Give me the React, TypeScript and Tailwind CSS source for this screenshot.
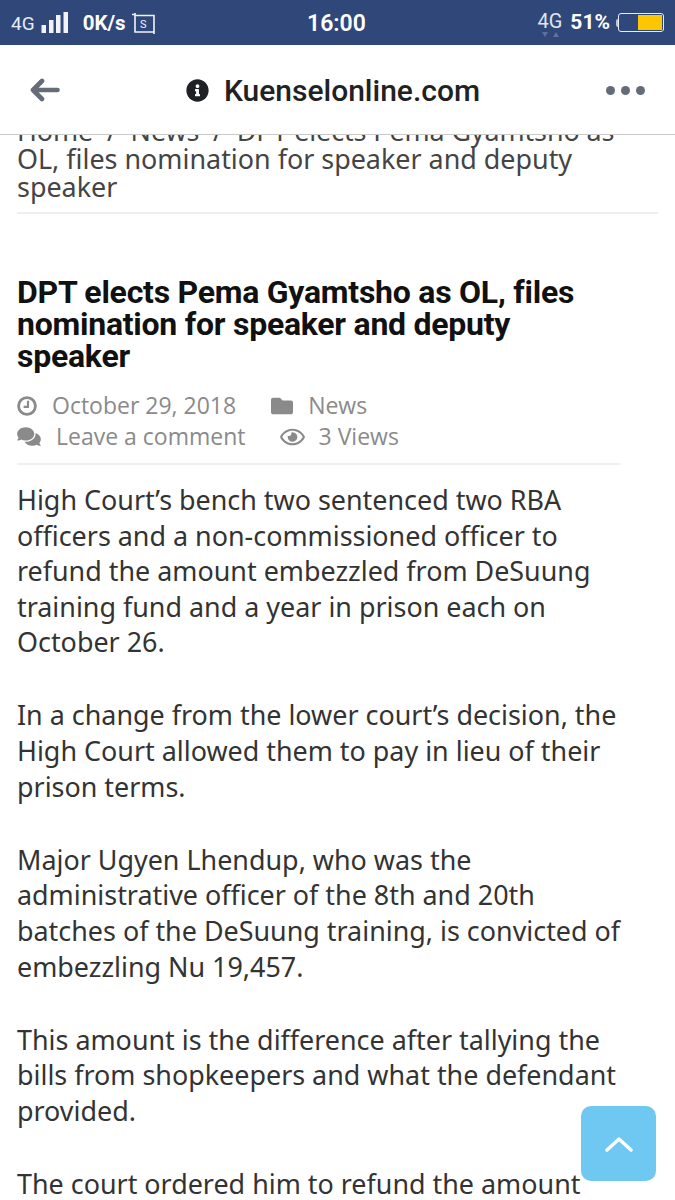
import React from "react";
import { FaInfoCircle, FaFolder, FaComments, FaRegEye } from "react-icons/fa";

const paragraphs = [
  ["High Court’s bench two sentenced two RBA", "officers and a non-commissioned officer to", "refund the amount embezzled from DeSuung", "training fund and a year in prison each on", "October 26."],
  ["In a change from the lower court’s decision, the", "High Court allowed them to pay in lieu of their", "prison terms."],
  ["Major Ugyen Lhendup, who was the", "administrative officer of the 8th and 20th", "batches of the DeSuung training, is convicted of", "embezzling Nu 19,457."],
  ["This amount is the difference after tallying the", "bills from shopkeepers and what the defendant", "provided."],
  ["The court ordered him to refund the amount"],
];

function StatusBar() {
  return (
    <div className="h-[45px] shrink-0 bg-[#2f4779] text-white flex items-center justify-between pl-[11px] pr-[10px] font-['Roboto',sans-serif]">
      <div className="flex items-center w-[200px]">
        <span className="text-[19px] mt-[3px] text-[#e8ecf4]">4G</span>
        <svg width="28" height="23" viewBox="0 0 28 23" className="ml-[6px] mb-[1px]" fill="#f1f3f8">
          <rect x="0.5" y="14" width="4.5" height="8" />
          <rect x="8" y="9" width="4.5" height="13" />
          <rect x="15" y="4" width="4.5" height="18" />
          <rect x="22.5" y="1" width="4.5" height="21" />
        </svg>
        <span className="ml-[14px] text-[20.5px] font-bold mt-[1px]">0K/s</span>
        <svg width="26" height="24" viewBox="0 0 26 24" className="ml-[5px] mt-[2px]" fill="none" stroke="#f1f3f8" strokeWidth="1.6">
          <path d="M1 2.5h3M4 1v19h19M4 3.5h19v16" />
          <path d="M23 19v3" />
          <text x="9" y="16" fontSize="11" fontFamily="Roboto, sans-serif" fill="#f1f3f8" stroke="none">S</text>
        </svg>
      </div>
      <span className="text-[23px] font-semibold mr-[3px] mt-[3px] font-['Roboto',sans-serif]">16:00</span>
      <div className="flex items-center w-[200px] justify-end">
        <div className="relative mr-[8px] mb-[3px]">
          <span className="block text-[20px] leading-[20px] text-[#dfe4ee]">4G</span>
          <svg width="22" height="7" viewBox="0 0 22 7" className="absolute left-[3px] top-[20px]" fill="#5e7199">
            <path d="M2 1h6L5 6zM13 6h6l-3-5z" />
          </svg>
        </div>
        <span className="text-[21px] font-bold mt-[1px]">51%</span>
        <div className="w-[2px] h-[8px] bg-[#b9c3d6] ml-[6px] rounded-l-sm" />
        <div className="w-[46px] h-[19px] border border-[#e8ecf4] rounded-[3px] flex justify-end p-[1px] mr-[1px]">
          <div className="w-[24px] bg-[#fcc600]" />
        </div>
      </div>
    </div>
  );
}

function BrowserBar() {
  return (
    <div className="relative z-10 h-[90px] shrink-0 bg-white border-b border-[#c9c9c9] flex items-center justify-between pl-[30px] pr-[30px]">
      <svg width="30" height="24" viewBox="0 0 30 24" fill="none" stroke="#656c78" strokeWidth="4.6" strokeLinecap="round" strokeLinejoin="round">
        <path d="M27.5 12H3M12 3l-9 9 9 9" />
      </svg>
      <div className="flex items-center gap-[15px] mt-[2px]">
        <FaInfoCircle className="text-[#1f2124] w-[23px] h-[23px]" />
        <span className="text-[30px] font-medium text-[#1f2124] font-['Roboto',sans-serif]">Kuenselonline.com</span>
      </div>
      <div className="flex gap-[6px] mt-[1px]">
        <span className="w-[9px] h-[9px] rounded-full bg-[#656c78]" />
        <span className="w-[9px] h-[9px] rounded-full bg-[#656c78]" />
        <span className="w-[9px] h-[9px] rounded-full bg-[#656c78]" />
      </div>
    </div>
  );
}

export default function App() {
  return (
    <div className="relative w-[675px] h-[1200px] overflow-hidden bg-white flex flex-col font-['Noto_Sans',sans-serif]">
      <StatusBar />
      <BrowserBar />
      <main className="flex-1 overflow-hidden">
        {/* breadcrumb trail, scrolled partly under the browser bar */}
        <div className="-mt-[18px] mx-[17px] pb-[11px] border-b-2 border-[#efefef] text-[26.9px] leading-[28px] text-[#444]">
          <div className="tracking-[-0.1px]">Home &nbsp;/&nbsp; News &nbsp;/&nbsp; DPT elects Pema Gyamtsho as</div>
          <div>OL, files nomination for speaker and deputy</div>
          <div>speaker</div>
        </div>

        <h1 className="mt-[62px] mx-[17px] text-[32px] leading-[32px] font-bold text-[#111] tracking-[-0.25px] font-['Roboto',sans-serif]">
          DPT elects Pema Gyamtsho as OL, files
          <br />
          nomination for speaker and deputy
          <br />
          speaker
        </h1>

        <div className="mt-[18px] ml-[17px] w-[603px] pb-[11px] border-b-2 border-[#f0f0f0] text-[23px] leading-[31px] text-[#8a8a8a] font-['Open_Sans',sans-serif]">
          <div className="flex items-center">
            <svg width="20" height="20" viewBox="0 0 20 20" fill="none" stroke="currentColor" strokeWidth="2.8">
              <circle cx="10" cy="10" r="8.4" />
              <path d="M11 4.8v6H6.6" strokeWidth="2.2" />
            </svg>
            <span className="ml-[15px]">October 29, 2018</span>
            <FaFolder className="ml-[34px] w-[24px] h-[22px]" />
            <span className="ml-[14px]">News</span>
          </div>
          <div className="flex items-center">
            <FaComments className="w-[24px] h-[21px]" />
            <span className="ml-[15px]">Leave a comment</span>
            <FaRegEye className="ml-[34px] w-[25px] h-[22px]" />
            <span className="ml-[14px]">3 Views</span>
          </div>
        </div>

        <article className="mt-[17px] mx-[17px] text-[26.9px] leading-[35.6px] text-[#333] flex flex-col gap-[37.5px]">
          {paragraphs.map((lines) => (
            <p key={lines[0]}>
              {lines.map((line) => (
                <span key={line} className="block whitespace-nowrap">{line}</span>
              ))}
            </p>
          ))}
        </article>
      </main>

      {/* back-to-top button floats over the article */}
      <button className="absolute left-[581px] top-[1106px] w-[75px] h-[75px] rounded-[10px] bg-[#6fc8f1] flex items-center justify-center">
        <svg width="28" height="16" viewBox="0 0 28 16" fill="none" stroke="#fff" strokeWidth="3.4" strokeLinecap="round" strokeLinejoin="round">
          <path d="M2 14L14 3l12 11" />
        </svg>
      </button>
    </div>
  );
}
